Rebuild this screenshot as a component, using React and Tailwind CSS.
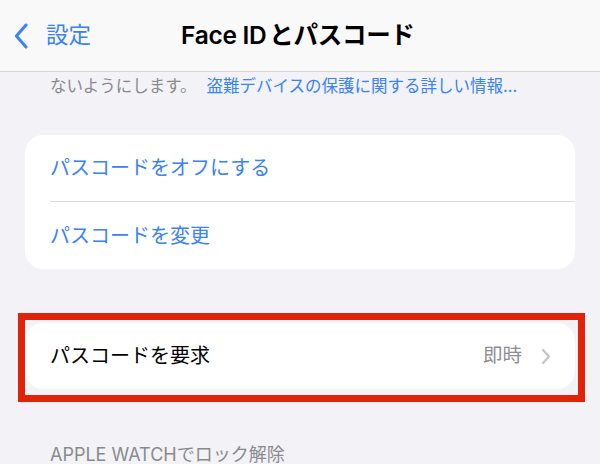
import React from "react";

const App = () => {
  return (
    <div className="w-[600px] h-[464px] overflow-hidden bg-[#f2f2f7] [font-family:Inter,'Noto_Sans_CJK_JP',sans-serif]">
      {/* nav bar */}
      <div className="h-[72px] bg-[#f9f9f9] border-b border-[#d4d4d6] flex items-center">
        <div className="flex items-center ml-[14px] text-[#3a82f6]">
          <svg width="14" height="26" viewBox="0 0 14 26" fill="none">
            <path
              d="M12 2 L2.4 13 L12 24"
              stroke="#3a82f6"
              strokeWidth="3"
              strokeLinecap="round"
              strokeLinejoin="round"
            />
          </svg>
          <span className="ml-[18px] text-[22.5px] leading-none">設定</span>
        </div>
        <div className="ml-[90px] text-[24.5px] font-semibold text-black leading-none tracking-[-0.3px]">
          Face ID<span className="ml-[3px]">とパスコード</span>
        </div>
      </div>

      {/* footer of previous section */}
      <div className="pl-[50px] pt-[3px] text-[16.5px] leading-[22px] text-[#8a8a8e]">
        ないようにします。
        <span className="ml-[10px] text-[#3a82f6]">盗難デバイスの保護に関する詳しい情報...</span>
      </div>

      {/* passcode actions */}
      <div className="mx-[25px] mt-[38px] bg-white rounded-[18px] overflow-hidden">
        <div className="h-[66px] flex items-center pl-[25px] text-[20px] text-[#3a82f6]">
          パスコードをオフにする
        </div>
        <div className="ml-[25px] h-px bg-[#dcdce0]" />
        <div className="h-[67px] flex items-center pl-[25px] text-[20px] text-[#3a82f6]">
          パスコードを変更
        </div>
      </div>

      {/* highlighted row */}
      <div className="ml-[18px] w-[567px] mt-[44px] border-[7px] border-[#e1230c] pt-[3px] pb-[6px] pr-[3px]">
        <div className="h-[66px] bg-white rounded-[18px] flex items-center pl-[25px] pr-[24px]">
          <span className="text-[20px] text-black">パスコードを要求</span>
          <span className="ml-auto text-[19.5px] text-[#8e8e93]">即時</span>
          <svg className="ml-[19px]" width="10" height="17" viewBox="0 0 10 17" fill="none">
            <path
              d="M2 2 L8 8.5 L2 15"
              stroke="#c4c4c8"
              strokeWidth="2.2"
              strokeLinecap="round"
              strokeLinejoin="round"
            />
          </svg>
        </div>
      </div>

      <div className="pl-[50px] mt-[42px] text-[18px] leading-[22px] text-[#8a8a8e]">
        APPLE WATCHでロック解除
      </div>
    </div>
  );
};

export default App;
